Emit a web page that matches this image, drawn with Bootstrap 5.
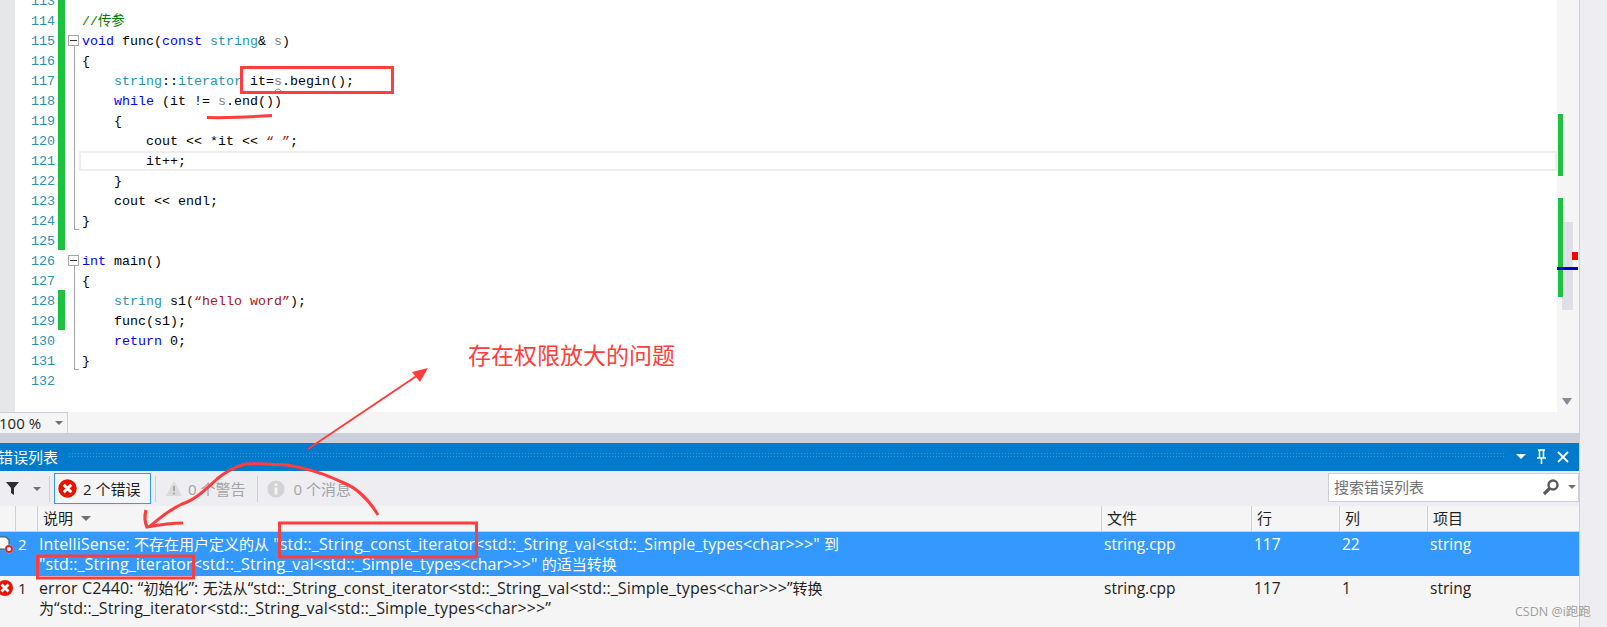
<!DOCTYPE html>
<html lang="zh">
<head>
<meta charset="utf-8">
<title>错误列表</title>
<link rel="stylesheet" href="https://cdn.jsdelivr.net/npm/bootstrap@5.3.0/dist/css/bootstrap.min.css">
<style>
html,body{height:627px;overflow:hidden;background:#eeeef2;}
body{font-family:"Open Sans","Noto Sans CJK SC",sans-serif;font-size:15px;color:#1e1e1e;line-height:20px;}
.stage{width:1607px;height:627px;overflow:hidden;}
.main-col{width:1579px;border-right:1px solid #cccedb;box-sizing:content-box;flex:none;}
.edit-area{height:412px;overflow:hidden;}
.code-pane{width:1557px;background:#fff;overflow:hidden;}
.gutter{width:15px;background:#e6e7e8;flex:none;}
.code-lines{margin-top:-10px;font-family:"Liberation Mono","Noto Sans CJK SC",monospace;font-size:13.33px;color:#000;line-height:24px;flex-grow:1;}
.cl{height:20px;}
.ln{width:40px;text-align:right;color:#2b91af;flex:none;height:20px;}
.chg{width:7px;margin-left:3px;flex:none;}
.chg.on{background:#1cc240;}
.fold{width:14px;flex:none;position:relative;}
.fold.vl::before{content:"";position:absolute;left:9px;top:0;bottom:0;width:1px;background:#a5a5a5;}
.fold.vl.top::before{top:16px;}
.fold.end::after{content:"";position:absolute;left:9px;bottom:0;width:5px;height:1px;background:#a5a5a5;}
.fold .fb{position:absolute;left:3px;top:5px;width:11px;height:11px;border:1px solid #a5a5a5;background:#fff;}
.fold .fb::after{content:"";position:absolute;left:1px;right:1px;top:4px;height:1px;background:#333;}
.tx{padding-left:3px;flex-grow:1;height:20px;white-space:pre;}
.cur .tx{border:2px solid #eeeeee;padding-left:1px;line-height:18px;margin-top:1px;}
.k{color:#0000ff}.t{color:#2b91af}.c{color:#008000}.s{color:#a31515}.p{color:#808080}
.vscroll{width:22px;background:#f5f5f5;position:relative;flex:none;}
.vm{position:absolute;}
.m1{left:1px;top:114px;width:5px;height:62px;background:#1cc240;}
.m2{left:1px;top:198px;width:5px;height:99px;background:#1cc240;}
.thumb{left:5px;top:222px;width:11px;height:88px;background:#dedfe7;}
.mred{left:15px;top:252px;width:6px;height:8px;background:#ff0000;}
.mblue{left:0;top:267px;width:21px;height:3px;background:#0000c8;}
.marr{left:5px;top:398px;width:0;height:0;border-left:5.5px solid transparent;border-right:5.5px solid transparent;border-top:7px solid #868999;}
.zoom-bar{height:21px;background:#f5f5f5;}
.zoom-box{width:69px;height:21px;border-top:1px solid #cccedb;border-right:1px solid #cccedb;background:#f5f5f5;margin-left:-1px;color:#1e1e1e;font-size:15px;line-height:20px;}
.tri{width:0;height:0;border-left:4px solid transparent;border-right:4px solid transparent;border-top:4px solid #717171;flex:none;}
.hdr .tri{border-left-width:5px;border-right-width:5px;border-top-width:5px;}
.splitter{height:10px;background:#cccedb;}
.titlebar{height:28px;background:#007acc;color:#fff;padding-right:2px;font-size:15px;}
.titlebar .ttl{margin-left:-2px;width:70px;flex:none;}
.dots{height:7px;margin-top:-3px;flex-grow:1;margin-right:5px;background-image:radial-gradient(circle,#3a9ad9 0.7px,transparent 0.8px);background-size:3px 3px;}
.toolbar{height:35px;background:#eeeef2;}
.sep{width:1px;height:26px;background:#cccedb;flex:none;}
.errbtn{width:97px;height:31px;border:1px solid #3399ff;background:#f5f5f5;margin:0 4px;padding-left:3px;flex:none;}
.errbtn .et{margin-left:6px;}
.filt{padding-left:6px;width:49px;flex:none;}
.dimt{color:#a2a4a5;flex:none;}
.warn-ic{margin-left:9px;margin-right:5px;flex:none;}
.sep-w{margin-left:12px;margin-right:9px;}
.sbox{width:251px;height:29px;background:#fff;border:1px solid #cccedb;color:#717171;padding:0 2px 0 5px;margin-top:-3px;font-size:15px;}
.cols{display:grid;grid-template-columns:15px 22px 1064px 150px 88px 88px 152px;}
.hdr{height:26px;background:#f5f5f5;border-bottom:1px solid #cccedb;}
.hc{border-left:1px solid #cccedb;padding-left:5px;line-height:25px;white-space:nowrap;}
.hc.nb{border-left:0;}
.row-x{padding-top:2px;}
.sel{height:44px;background:#3399ff;color:#fff;}
.plain{height:51px;background:#f5f5f5;}
.span2{grid-column:span 2;white-space:nowrap;overflow:hidden;}
.dc{padding-left:2px;white-space:nowrap;font-size:16px;letter-spacing:.1px;}
.cj{font-size:15px;letter-spacing:0;}
.fc{padding-left:3px;font-size:15.5px;}
.ovl{position:absolute;left:0;top:0;pointer-events:none;}
.note{position:absolute;left:468px;top:338px;font-size:23px;line-height:32px;color:#ff3d3d;font-family:"Noto Sans CJK SC",sans-serif;}
.wm{position:absolute;left:1515px;top:604px;font-size:12.5px;line-height:16px;color:#8f8f8f;opacity:.85;white-space:nowrap;}
</style>
</head>
<body class="position-relative">
<div class="stage d-flex">
 <div class="main-col d-flex flex-column">
  <div class="edit-area d-flex">
   <div class="code-pane d-flex">
    <div class="gutter"></div>
    <div class="code-lines">
     <div class="cl d-flex"><div class="ln">113</div><div class="chg on"></div><div class="fold"></div><div class="tx"></div></div>
     <div class="cl d-flex"><div class="ln">114</div><div class="chg on"></div><div class="fold"></div><div class="tx c">//传参</div></div>
     <div class="cl d-flex"><div class="ln">115</div><div class="chg on"></div><div class="fold vl top"><span class="fb"></span></div><div class="tx"><span class="k">void</span> func(<span class="k">const</span> <span class="t">string</span>&amp; <span class="p">s</span>)</div></div>
     <div class="cl d-flex"><div class="ln">116</div><div class="chg on"></div><div class="fold vl"></div><div class="tx">{</div></div>
     <div class="cl d-flex"><div class="ln">117</div><div class="chg on"></div><div class="fold vl"></div><div class="tx">    <span class="t">string</span>::<span class="t">iterator</span> it=<span class="p">s</span>.begin();</div></div>
     <div class="cl d-flex"><div class="ln">118</div><div class="chg on"></div><div class="fold vl"></div><div class="tx">    <span class="k">while</span> (it != <span class="p">s</span>.end())</div></div>
     <div class="cl d-flex"><div class="ln">119</div><div class="chg on"></div><div class="fold vl"></div><div class="tx">    {</div></div>
     <div class="cl d-flex"><div class="ln">120</div><div class="chg on"></div><div class="fold vl"></div><div class="tx">        cout &lt;&lt; *it &lt;&lt; <span class="s">“ ”</span>;</div></div>
     <div class="cl d-flex cur"><div class="ln">121</div><div class="chg on"></div><div class="fold vl"></div><div class="tx">        it++;</div></div>
     <div class="cl d-flex"><div class="ln">122</div><div class="chg on"></div><div class="fold vl"></div><div class="tx">    }</div></div>
     <div class="cl d-flex"><div class="ln">123</div><div class="chg on"></div><div class="fold vl"></div><div class="tx">    cout &lt;&lt; endl;</div></div>
     <div class="cl d-flex"><div class="ln">124</div><div class="chg on"></div><div class="fold vl end"></div><div class="tx">}</div></div>
     <div class="cl d-flex"><div class="ln">125</div><div class="chg on"></div><div class="fold"></div><div class="tx"></div></div>
     <div class="cl d-flex"><div class="ln">126</div><div class="chg"></div><div class="fold vl top"><span class="fb"></span></div><div class="tx"><span class="k">int</span> main()</div></div>
     <div class="cl d-flex"><div class="ln">127</div><div class="chg"></div><div class="fold vl"></div><div class="tx">{</div></div>
     <div class="cl d-flex"><div class="ln">128</div><div class="chg on"></div><div class="fold vl"></div><div class="tx">    <span class="t">string</span> s1(<span class="s">“hello word”</span>);</div></div>
     <div class="cl d-flex"><div class="ln">129</div><div class="chg on"></div><div class="fold vl"></div><div class="tx">    func(s1);</div></div>
     <div class="cl d-flex"><div class="ln">130</div><div class="chg"></div><div class="fold vl"></div><div class="tx">    <span class="k">return</span> 0;</div></div>
     <div class="cl d-flex"><div class="ln">131</div><div class="chg"></div><div class="fold vl end"></div><div class="tx">}</div></div>
     <div class="cl d-flex"><div class="ln">132</div><div class="chg"></div><div class="fold"></div><div class="tx"></div></div>
    </div>
   </div>
   <div class="vscroll">
    <div class="vm thumb"></div>
    <div class="vm m1"></div>
    <div class="vm m2"></div>
    <div class="vm mred"></div>
    <div class="vm mblue"></div>
    <div class="vm marr"></div>
   </div>
  </div>
  <div class="zoom-bar d-flex">
   <div class="zoom-box d-flex align-items-center justify-content-between"><span>100 %</span><span class="tri me-1"></span></div>
  </div>
  <div class="splitter"></div>
  <div class="titlebar d-flex align-items-center">
   <span class="ttl">错误列表</span>
   <span class="dots"></span>
   <svg width="67" height="16" viewBox="-5 0 67 16"><path d="M1 5h10L6 10z" fill="#fff"/><path d="M23 1h7M24.5 1v8M28.5 1v8M22 9h9M26.5 9v6" stroke="#fff" stroke-width="1.6" fill="none"/><path d="M43 3l10 10M53 3L43 13" stroke="#fff" stroke-width="1.8" fill="none"/></svg>
  </div>
  <div class="toolbar d-flex align-items-center">
   <div class="filt d-flex align-items-center">
    <svg width="13" height="13" viewBox="0 0 13 13"><path d="M0 0h13L8 6v7L5 11V6z" fill="#2d2d30"/></svg>
    <span class="tri ms-auto me-2"></span>
   </div>
   <div class="sep"></div>
   <div class="errbtn d-flex align-items-center">
    <svg width="19" height="19" viewBox="0 0 19 19"><circle cx="9.5" cy="9.5" r="9.2" fill="#e51400"/><path d="M5.7 5.7l7.6 7.6M13.3 5.7l-7.6 7.6" stroke="#fff" stroke-width="3"/></svg>
    <span class="et">2 个错误</span>
   </div>
   <div class="sep"></div>
   <svg class="warn-ic" width="18" height="17" viewBox="0 0 18 17"><path d="M9 1l8 15H1z" fill="#d9dada"/><path d="M9 6v5M9 12.5v2" stroke="#a8a8a8" stroke-width="2"/></svg>
   <span class="dimt">0 个警告</span>
   <div class="sep sep-w"></div>
   <svg width="18" height="18" viewBox="0 0 18 18"><circle cx="9" cy="9" r="8.6" fill="#d3d3d3"/><path d="M9 3.5v2.5M9 7.5v7" stroke="#f3f3f3" stroke-width="3"/></svg>
   <span class="dimt ms-2">0 个消息</span>
   <div class="sbox d-flex align-items-center ms-auto">
    <span>搜索错误列表</span>
    <svg class="ms-auto" width="18" height="18" viewBox="0 0 18 18"><circle cx="11" cy="7" r="4.5" fill="none" stroke="#5a5a5a" stroke-width="2.4"/><path d="M7.5 10.5L2 16" stroke="#5a5a5a" stroke-width="3.2"/></svg>
    <span class="tri ms-2"></span>
   </div>
  </div>
  <div class="cols hdr">
   <div class="hc nb"></div><div class="hc"></div>
   <div class="hc d-flex align-items-center">说明<span class="tri ms-2"></span></div>
   <div class="hc">文件</div><div class="hc">行</div><div class="hc">列</div><div class="hc">项目</div>
  </div>
  <div class="cols row-x sel">
   <div class="span2 d-flex">
    <svg width="14" height="20" viewBox="0 0 14 20" class="flex-none"><path d="M-1 3h7l3 3v9H-1z" fill="#fff" stroke="#555" stroke-width="1.2"/><circle cx="9" cy="15" r="4.2" fill="#fff"/><circle cx="9" cy="15" r="3" fill="none" stroke="#d8232a" stroke-width="2"/></svg>
    <span class="ms-1">2</span>
   </div>
   <div class="dc">IntelliSense: <span class="cj">不存在用户定义的从</span> "std::_String_const_iterator&lt;std::_String_val&lt;std::_Simple_types&lt;char&gt;&gt;&gt;" <span class="cj">到</span><br>"std::_String_iterator&lt;std::_String_val&lt;std::_Simple_types&lt;char&gt;&gt;&gt;" <span class="cj">的适当转换</span></div>
   <div class="fc">string.cpp</div><div class="fc">117</div><div class="fc">22</div><div class="fc">string</div>
  </div>
  <div class="cols row-x plain">
   <div class="span2 d-flex">
    <svg width="14" height="20" viewBox="0 0 14 20" class="flex-none"><circle cx="5" cy="10" r="8" fill="#e51400"/><path d="M1.5 6.5l7 7M8.5 6.5l-7 7" stroke="#fff" stroke-width="2.8"/></svg>
    <span class="ms-1">1</span>
   </div>
   <div class="dc">error C2440: “<span class="cj">初始化</span>”: <span class="cj">无法从</span>“std::_String_const_iterator&lt;std::_String_val&lt;std::_Simple_types&lt;char&gt;&gt;&gt;”<span class="cj">转换</span><br><span class="cj">为</span>“std::_String_iterator&lt;std::_String_val&lt;std::_Simple_types&lt;char&gt;&gt;&gt;”</div>
   <div class="fc">string.cpp</div><div class="fc">117</div><div class="fc">1</div><div class="fc">string</div>
  </div>
 </div>
</div>
<svg class="ovl" width="1607" height="627" viewBox="0 0 1607 627" fill="none" stroke="#ff3d3d">
 <rect x="241.5" y="67.5" width="151" height="25" stroke-width="3"/>
 <rect x="279.5" y="523" width="197" height="34" stroke-width="3"/>
 <rect x="37.5" y="556" width="156" height="22" stroke-width="3"/>
 <path d="M207 117.5C225 118 250 117 272 115.5" stroke-width="3"/>
 <path d="M275 91q3-4 6 0" stroke-width="1" stroke="#ff6a6a"/>
 <path d="M308 449L424 371" stroke-width="2"/>
 <path d="M428 368L412 372L420 382z" fill="#ff3d3d" stroke="none"/>
 <path d="M378 515C372 505 368 500 360 493C350 484 345 484 335 479C320 472 305 468 287 465C270 464 255 463 245 464C232 468 225 472 217 479C205 490 195 500 182 504C165 512 158 520 150 526" stroke-width="3"/>
 <path d="M146 510C144 518 145 523 147 527C158 525 170 523 183 523" stroke-width="3.2"/>
</svg>
<div class="note">存在权限放大的问题</div>
<div class="wm">CSDN @i跑跑</div>
</body>
</html>
